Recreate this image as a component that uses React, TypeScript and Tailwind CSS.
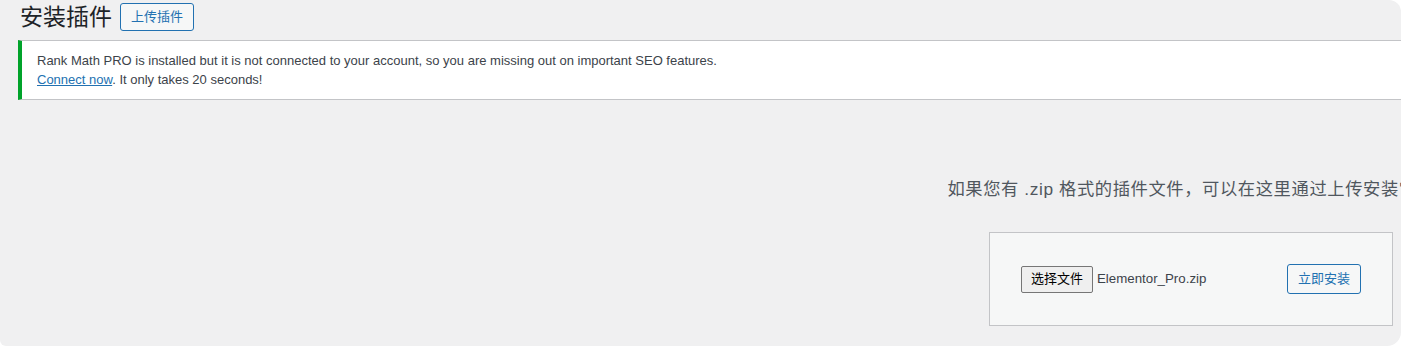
const font = 'font-["Liberation_Sans","Noto_Sans_CJK_SC",sans-serif]';

export default function App() {
  return (
    <div className={`w-[1401px] h-[346px] bg-white overflow-hidden ${font}`}>
      <div className="h-full bg-[#f0f0f1] rounded-tr-[12px] rounded-br-[14px] rounded-bl-[6px] overflow-hidden">
        <div className="flex items-center gap-[8px] pl-[20px] pt-[3px]">
          <h1 className="text-[23px] leading-[28px] text-[#1d2327] font-normal">安装插件</h1>
          <button className="h-[28px] px-[10px] text-[13px] leading-[26px] text-[#2271b1] bg-[#f6f7f7] border border-[#2271b1] rounded-[3px]">
            上传插件
          </button>
        </div>

        <div className="mt-[9px] ml-[18px] w-[1420px] bg-white border-l-4 border-l-[#00a32a] border-y border-y-[#c3c4c7] pl-[15px] py-[10px] text-[13px] leading-[19px] text-[#3c434a]">
          <p>
            Rank Math PRO is installed but it is not connected to your account, so you are missing out on important SEO
            features.
          </p>
          <p>
            <a href="#" className="text-[#2271b1] underline">
              Connect now
            </a>
            . It only takes 20 seconds!
          </p>
        </div>

        <div className="ml-[19px] w-[2344px] flex flex-col items-center">
          <p className="mt-[77px] text-[17.3px] leading-[24px] tracking-[0.6px] text-[#50575e] whitespace-nowrap">
            如果您有 .zip 格式的插件文件，可以在这里通过上传安装它。
          </p>
          <form className="mt-[31px] w-[404px] h-[94px] bg-[#f6f7f7] border border-[#c3c4c7] px-[31px] flex items-center justify-between">
            <div className="flex items-center gap-[4px]">
              <span className="h-[27px] w-[72px] flex items-center justify-center text-[13px] text-black bg-[#efefef] border border-[#767676] rounded-[2px]">
                选择文件
              </span>
              <span className="text-[13.3px] text-[#3c434a]">Elementor_Pro.zip</span>
            </div>
            <button
              type="button"
              className="h-[30px] w-[74px] text-[13px] text-[#2271b1] bg-[#f6f7f7] border border-[#2271b1] rounded-[3px]"
            >
              立即安装
            </button>
          </form>
        </div>
      </div>
    </div>
  );
}
